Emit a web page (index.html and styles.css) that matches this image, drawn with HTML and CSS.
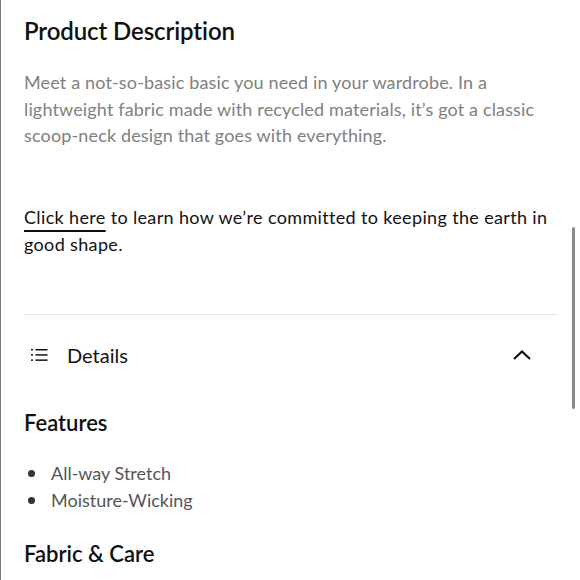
FILE: index.html
```html
<!DOCTYPE html>
<html>
<head>
<meta charset="utf-8">
<link rel="stylesheet" href="styles.css">
</head>
<body>
<div class="page">
  <h2 class="title">Product Description</h2>
  <p class="desc">Meet a not-so-basic basic you need in your wardrobe. In a lightweight fabric made with recycled materials, it’s got a classic scoop-neck design that goes with everything.</p>
  <p class="earth"><a class="link" href="#">Click here</a> to learn how we’re committed to keeping the earth in good shape.</p>
  <div class="divider"></div>
  <div class="acc-head">
    <svg class="list-icon" width="18" height="14" viewBox="0 0 18 14">
      <g fill="#111">
        <rect x="0" y="1" width="2" height="1.5"/>
        <rect x="0" y="6.2" width="2" height="1.5"/>
        <rect x="0" y="11.4" width="2" height="1.5"/>
        <rect x="4.5" y="1" width="12" height="1.5"/>
        <rect x="4.5" y="6.2" width="12" height="1.5"/>
        <rect x="4.5" y="11.4" width="12" height="1.5"/>
      </g>
    </svg>
    <span class="acc-label">Details</span>
    <svg class="chev" width="20" height="12" viewBox="0 0 20 12">
      <path d="M2 10 L10 2.5 L18 10" fill="none" stroke="#111" stroke-width="2.2"/>
    </svg>
  </div>
  <h3 class="sub">Features</h3>
  <ul class="bullets">
    <li>All-way Stretch</li>
    <li>Moisture-Wicking</li>
  </ul>
  <h3 class="sub sub2">Fabric &amp; Care</h3>
  <div class="scrollbar"></div>
</div>
</body>
</html>
```
FILE: styles.css
```css
html, body { margin: 0; padding: 0; background: #fff; }
body { font-family: Lato, "Noto Sans", sans-serif; }
.page {
  position: relative;
  height: 580px;
  overflow: hidden;
  border-left: 1px solid #7a7a7a;
  padding: 0 23px 0 23px;
  box-sizing: border-box;
  width: 580px;
}
.title {
  margin: 0;
  padding-top: 16px;
  font-size: 24px;
  font-weight: 600;
  line-height: 30px;
  letter-spacing: -0.1px;
  color: #111;
}
.desc {
  margin: 23px 0 0 0;
  font-size: 18px;
  line-height: 26.5px;
  letter-spacing: 0.15px;
  color: #808080;
  width: 534px;
}
.earth {
  margin: 55px 0 0 0;
  font-size: 18px;
  line-height: 27px;
  letter-spacing: 0.35px;
  color: #111;
  width: 534px;
}
.link {
  color: #111;
  text-decoration: underline;
  text-underline-offset: 6px;
  text-decoration-thickness: 1.5px;
}
.divider {
  margin-top: 56px;
  height: 1px;
  background: #e6e6e6;
  width: 534px;
}
.acc-head {
  display: flex;
  align-items: center;
  height: 80px;
  width: 534px;
  padding-left: 7px;
  padding-right: 26px;
  box-sizing: border-box;
}
.list-icon { flex: none; }
.acc-label {
  margin-left: 18px;
  font-size: 20px;
  color: #111;
  flex: 1;
}
.chev { flex: none; }
.sub {
  margin: 0;
  font-size: 22px;
  font-weight: 600;
  line-height: 28px;
  color: #111;
  padding-top: 14px;
}
.bullets {
  margin: 23px 0 0 0;
  padding: 0;
  list-style: none;
  font-size: 18px;
  line-height: 27px;
  color: #555;
}
.bullets li {
  display: flex;
  align-items: center;
}
.bullets li::before {
  content: "";
  width: 7px;
  height: 7px;
  border-radius: 50%;
  background: #333;
  margin-left: 4px;
  margin-right: 16px;
  flex: none;
}
.sub2 { padding-top: 26px; }
.scrollbar {
  position: absolute;
  right: 5px;
  top: 227px;
  width: 3px;
  height: 182px;
  border-radius: 2px;
  background: #8a8a8a;
}
```
